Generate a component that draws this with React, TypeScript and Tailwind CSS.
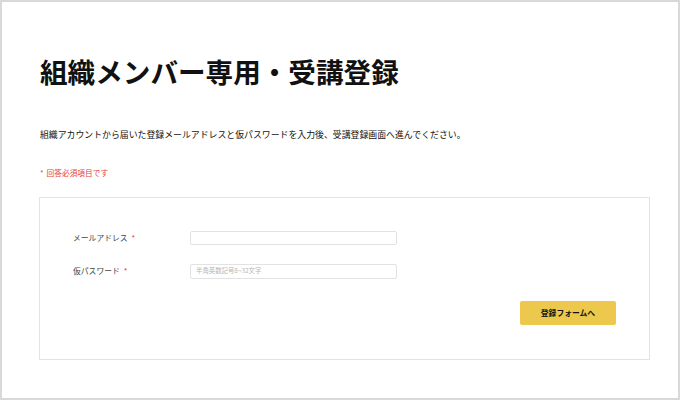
import React from "react";

const jp = '"Noto Sans CJK JP", "Noto Sans", sans-serif';

export default function App() {
  return (
    <div
      className="w-[680px] h-[400px] border-2 border-[#d9d9d9] bg-white box-border overflow-hidden"
      style={{ fontFamily: jp }}
    >
      <div className="pl-[38px] pr-[29px] pt-[54px]">
        <h1 className="text-[27.6px] leading-[30px] font-bold text-[#111]">
          組織メンバー専用・受講登録
        </h1>
        <p className="mt-[44px] text-[8.9px] leading-[10px] text-[#111]">
          組織アカウントから届いた登録メールアドレスと仮パスワードを入力後、受講登録画面へ進んでください。
        </p>
        <p className="mt-[28px] text-[7.7px] leading-[10px] text-[#e53e3e]">
          *<span className="ml-[3px]">回答必須項目です</span>
        </p>
        <div className="mt-[19px] ml-[-1px] w-[611px] h-[163px] border border-[#e3e3e3] bg-white pt-[33px] pl-[33px] pr-[33px] flex flex-col">
          <div className="flex items-center h-[14px]">
            <div className="w-[117px] text-[7.8px] text-[#444]">
              メールアドレス<span className="text-[#e53e3e] ml-[4px]">*</span>
            </div>
            <div className="w-[207px] h-[14px] border border-[#e2e2e2] rounded-[2px] bg-white"></div>
          </div>
          <div className="flex items-center h-[14px] mt-[19px]">
            <div className="w-[117px] text-[7.8px] text-[#444]">
              仮パスワード<span className="text-[#e53e3e] ml-[4px]">*</span>
            </div>
            <div className="w-[207px] h-[15px] border border-[#e2e2e2] rounded-[2px] bg-white flex items-center pl-[5px] text-[6.4px] text-[#b5b5b5]">
              半角英数記号8~32文字
            </div>
          </div>
          <div className="flex justify-end mt-[23px]">
            <div className="w-[96px] h-[24px] bg-[#ecc84c] rounded-[2px] flex items-center justify-center text-[7.8px] font-bold text-[#111]">
              登録フォームへ
            </div>
          </div>
        </div>
      </div>
    </div>
  );
}
